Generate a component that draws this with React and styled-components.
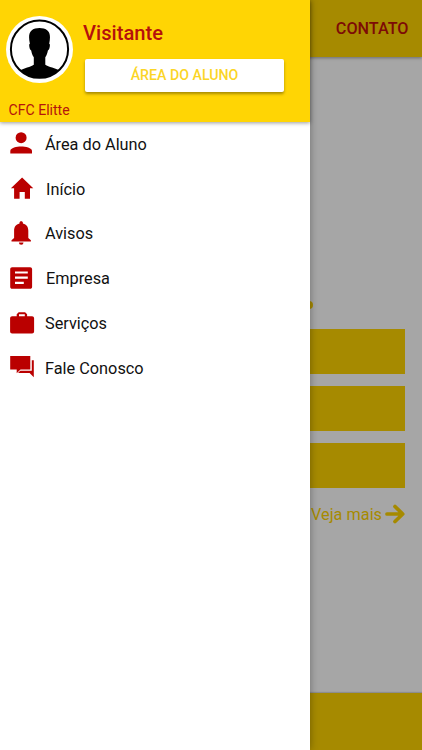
import React from 'react';
import styled, { createGlobalStyle } from 'styled-components';

const GlobalStyle = createGlobalStyle`
    * {
        box-sizing: border-box;
    }

    body {
        margin: 0;
        font-family: Roboto, "Liberation Sans", sans-serif;
        overflow: hidden;
    }
`;

const menu = [
    {
        label: 'Área do Aluno',
        icon: (
            <>
                <circle cx="12.1" cy="6.7" r="5.5" />
                <path d="M1.300 22.600V20c0-3.300 6.500-4.500 10.800-4.500S23 16.700 23 20v2.600z" />
            </>
        ),
    },
    {
        label: 'Início',
        indent: true,
        icon: <path d="M13.100 1.500 24.300 12.300H21v10.500h-5.200v-6.700h-5.200v6.700H5.100V12.300H1.900z" />,
    },
    {
        label: 'Avisos',
        icon: (
            <path d="M12.200.2c1 0 1.700.7 1.700 1.600v.7c3.700.8 5.400 3.600 5.400 7.200v7.200l2.600 2.300v1.200H2.500v-1.200l2.600-2.300V9.700c0-3.600 1.700-6.400 5.400-7.200v-.7c0-.9.7-1.600 1.700-1.600zM9.900 21.400h4.600a2.300 2.300 0 0 1-4.600 0z" />
        ),
    },
    {
        label: 'Empresa',
        indent: true,
        icon: (
            <path
                fillRule="evenodd"
                d="M3.100 1.200h18.100c1.100 0 1.900.8 1.900 1.900v17.800c0 1.100-.8 1.900-1.900 1.900H3.100c-1.100 0-1.900-.8-1.900-1.900V3.100c0-1.100.8-1.900 1.900-1.900zM6 5.500v2.100h12.800V5.500zm0 5.100v2.200h12.800v-2.200zm0 5.100v2.200h8.800v-2.200z"
            />
        ),
    },
    {
        label: 'Serviços',
        icon: (
            <path
                fillRule="evenodd"
                d="M9.700 1.300h6.400l2 2v2h5c1.100 0 2 .9 2 2v13.200c0 1.100-.9 2-2 2H3.100c-1.100 0-2-.9-2-2V7.300c0-1.100.9-2 2-2h4.600v-2zM10 3.300v2h5.800v-2z"
            />
        ),
    },
    {
        label: 'Fale Conosco',
        icon: (
            <>
                <path d="M1.200 1.100h20.100v13.400H11.500L7.700 18.300v-3.800H1.200z" />
                <path d="M22.800 5.200h2v17l-4.200-4.100H9.400v-.7l1.900-1.700h11.500z" />
            </>
        ),
    },
];

const Avatar = () => (
    <AvatarFrame>
        <svg width="67" height="67" viewBox="-.5 -.2 67 67">
            <defs>
                <clipPath id="face">
                    <circle cx="33" cy="33" r="28.500" />
                </clipPath>
            </defs>
            <circle cx="33" cy="33" r="28.600" fill="#fff" stroke="#000" strokeWidth="2" />
            <path
                clipPath="url(#face)"
                d="M27.300 48.500v-7.500c-1.500-2-2.200-4.300-2.600-6.700-1.500-.5-2.300-4.500-1.900-6.300l.6-.5c-1.300-6-1.200-10.500 1.400-13 2.300-2 5.200-2.600 8.200-2.600s5.800.6 8.200 2.600c2.700 2.500 2.700 7 1.500 13l.6.500c.4 1.800-.4 5.800-1.900 6.300-.4 2.400-1.200 4.700-2.600 6.700v7.500c3 2.500 10.500 3 14.500 6v12.500h-40V54.500c4-3 11-3.500 14-6z"
            />
        </svg>
    </AvatarFrame>
);

const App = () => {
    return (
        <Screen>
            <GlobalStyle />
            <Page>
                <TopBar>CONTATO</TopBar>
                <Content>
                    <Dots>
                        <Dot />
                    </Dots>
                    <Banner />
                    <Banner />
                    <Banner />
                    <More>
                        Veja mais
                        <svg width="20" height="20" viewBox="0 0 20 20">
                            <path
                                d="M2 10h15M10 2.500 17.700 10l-7.700 7.500"
                                fill="none"
                                stroke="currentColor"
                                strokeWidth="3.700"
                                strokeLinecap="round"
                                strokeLinejoin="round"
                            />
                        </svg>
                    </More>
                </Content>
                <BottomBar />
            </Page>
            <Drawer>
                <Header>
                    <Profile>
                        <Avatar />
                        <ProfileInfo>
                            <Name>Visitante</Name>
                            <Button>ÁREA DO ALUNO</Button>
                        </ProfileInfo>
                    </Profile>
                    <School>CFC Elitte</School>
                </Header>
                <MenuList>
                    {menu.map((item) => (
                        <MenuItem key={item.label} $indent={item.indent}>
                            <MenuIcon viewBox="0 0 26 26">{item.icon}</MenuIcon>
                            {item.label}
                        </MenuItem>
                    ))}
                </MenuList>
            </Drawer>
        </Screen>
    );
};

const Screen = styled.div`
    position: relative;
    width: 422px;
    height: 750px;
    overflow: hidden;
`;

const Page = styled.div`
    display: flex;
    flex-direction: column;
    height: 100%;
    background: #a6a6a6;
`;

const TopBar = styled.div`
    display: flex;
    align-items: center;
    justify-content: flex-end;
    height: 57px;
    padding-right: 13.5px;
    background: #a68a00;
    box-shadow: 0 1px 3px rgba(0, 0, 0, 0.35);
    color: #7d0b06;
    font-size: 16.200px;
    font-weight: 500;
    z-index: 1;
`;

const Content = styled.div`
    flex: 1;
    display: flex;
    flex-direction: column;
    gap: 12px;
    padding: 244px 17px 0;
`;

const Dots = styled.div`
    display: flex;
    justify-content: flex-end;
    height: 16px;
    padding: 0 92px 0 0;
`;

const Dot = styled.span`
    width: 8px;
    height: 8px;
    border-radius: 50%;
    background: #a68a00;
`;

const Banner = styled.div`
    height: 45px;
    background: #a68a00;
`;

const More = styled.div`
    display: flex;
    align-items: center;
    justify-content: flex-end;
    gap: 3px;
    height: 28px;
    color: #a68a00;
    font-size: 16.3px;
`;

const BottomBar = styled.div`
    height: 57.5px;
    background: #a68a00;
    box-shadow: 0 -1px 1px rgba(0, 0, 0, 0.15);
`;

const Drawer = styled.div`
    position: absolute;
    top: 0;
    left: 0;
    width: 310px;
    height: 100%;
    background: #fff;
    box-shadow: 0 0 8px rgba(0, 0, 0, 0.35);
    z-index: 2;
`;

const Header = styled.div`
    height: 122px;
    background: #ffd504;
    box-shadow: 0 1px 4px rgba(0, 0, 0, 0.4);
`;

const Profile = styled.div`
    display: flex;
    height: 100px;
    padding: 16px 0 0 5.5px;
`;

const AvatarFrame = styled.div`
    width: 67px;
    height: 67px;
    border-radius: 50%;
    background: #fff;
    flex-shrink: 0;
`;

const ProfileInfo = styled.div`
    margin-left: 10.5px;
`;

const Name = styled.div`
    height: 43px;
    padding-top: 5px;
    color: #b5100c;
    font-size: 20.200px;
    font-weight: 500;
    line-height: 24px;
`;

const Button = styled.button`
    display: block;
    width: 199px;
    height: 33px;
    margin-left: 2px;
    padding: 0 0 2px;
    border: 0;
    border-radius: 2px;
    background: #fff;
    box-shadow: 0 2px 3px rgba(0, 0, 0, 0.35);
    color: #fbd526;
    font-family: inherit;
    font-size: 14.2px;
    font-weight: 500;
`;

const School = styled.div`
    padding-left: 8.500px;
    color: #b5150c;
    font-size: 14.100px;
    line-height: 21px;
`;

const MenuList = styled.div`
    display: flex;
    flex-direction: column;
`;

const MenuItem = styled.div`
    display: flex;
    align-items: center;
    gap: ${({ $indent }) => ($indent ? '11px' : '10px')};
    height: 44.8px;
    padding-left: 9px;
    color: #111;
    font-size: 16.3px;
`;

const MenuIcon = styled.svg`
    width: 26px;
    height: 26px;
    fill: #ba0000;
`;

export default App;
